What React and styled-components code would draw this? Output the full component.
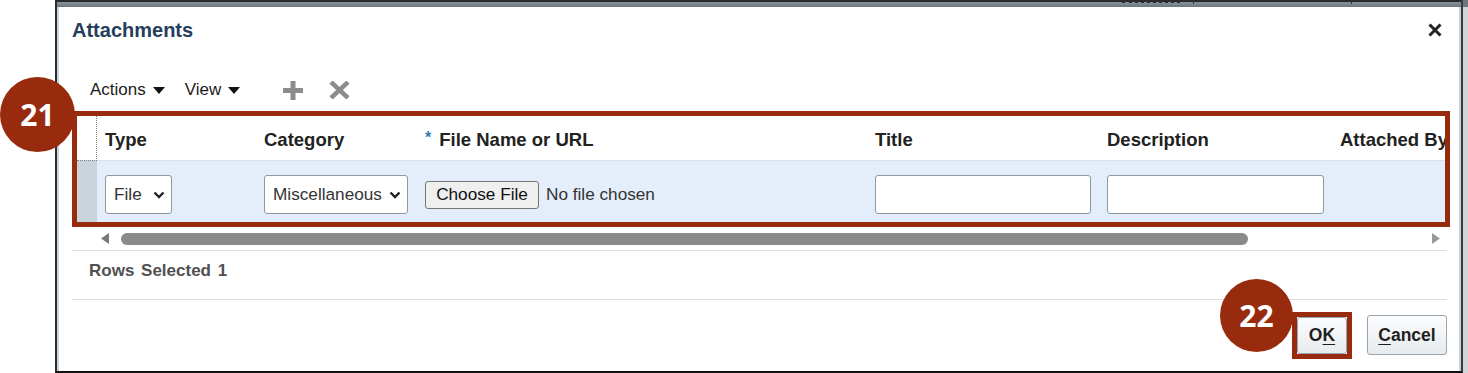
import React from 'react';
import styled, { createGlobalStyle } from 'styled-components';

const GlobalStyle = createGlobalStyle`
  html, body {
    margin: 0;
    padding: 0;
    background: #fff;
  }
  body {
    font-family: "Liberation Sans", Arial, sans-serif;
  }
`;

const RED = '#982b0d';

const Page = styled.div`
  position: relative;
  display: flex;
  width: 1468px;
  height: 373px;
  overflow: hidden;
  background: #fff;
`;

const Gutter = styled.div`
  flex: none;
  width: ${p => p.w}px;
  background: ${p => p.bg};
`;

const Dialog = styled.div`
  flex: none;
  width: 1408px;
  box-sizing: border-box;
  display: flex;
  flex-direction: column;
  border-left: 2px solid #2c2c2c;
  border-right: 2px solid #3a3a3a;
  border-bottom: 2px solid #111;
  background: #fff;
`;

const TopStrip = styled.div`
  height: 7px;
  flex: none;
  display: flex;
  align-items: flex-start;
  background: linear-gradient(#2a2a2a 0 2px, #87939a 2px, #6c777d 7px);
`;

const StripMark = styled.div`
  margin-left: ${p => p.at}px;
  width: ${p => p.w}px;
  height: 4px;
  border-top: ${p => (p.dotted ? '3px dotted #2b2b2b' : 'none')};
  border-left: ${p => (p.dotted ? 'none' : '1px solid #333')};
`;

const Body = styled.div`
  flex: 1;
  display: flex;
  flex-direction: column;
  border-left: 2px solid #c6d4df;
  border-right: 2px solid #c6d4df;
  padding: 0 12px 0 13px;
`;

const TitleBar = styled.div`
  height: 56px;
  box-sizing: border-box;
  padding-top: 12px;
  display: flex;
  align-items: flex-start;
  justify-content: space-between;
`;

const Title = styled.h1`
  margin: 0;
  font-size: 20px;
  line-height: 22px;
  font-weight: 700;
  color: #263d5c;
`;

const CloseIcon = styled.svg`
  margin: 4px 5px 0 0;
`;

const Toolbar = styled.div`
  height: 48px;
  box-sizing: border-box;
  padding: 6px 0 0 18px;
  display: flex;
  align-items: center;
`;

const Menu = styled.div`
  display: flex;
  align-items: center;
  gap: 7px;
  margin-right: ${p => p.mr}px;
  font-size: 17px;
  color: #1b1b1b;
`;

const ToolIcon = styled.svg`
  margin-right: ${p => p.mr || 0}px;
`;

const RedBox = styled.div`
  margin: 0 -3px 0 0;
  border: 5px solid ${RED};
  overflow: hidden;
`;

const cols = '20px 159px 161px 450px 232px 233px 1fr';

const HeadRow = styled.div`
  display: grid;
  grid-template-columns: ${cols};
  height: 44px;
  background: #fff;
  border-bottom: 1px solid #d9e0e6;
`;

const HeadCell = styled.div`
  display: flex;
  align-items: center;
  padding: 3px 0 0 8px;
  white-space: nowrap;
  font-size: 18.5px;
  font-weight: 700;
  color: #222;
`;

const SelectorHead = styled.div`
  border-right: 1px dotted #7d7d7d;
  border-bottom: 1px dotted #7d7d7d;
  margin-bottom: -1px;
`;

const Required = styled.span`
  color: #3579b6;
  font-size: 16px;
  align-self: flex-start;
  margin: 10px 8px 0 0;
`;

const DataRow = styled.div`
  display: grid;
  grid-template-columns: ${cols};
  height: 61px;
  background: #e4eefa;
`;

const Selector = styled.div`
  background: #c9d4dd;
`;

const Cell = styled.div`
  display: flex;
  align-items: center;
  box-sizing: border-box;
  padding: 6px 0 0 8px;
  font-size: 17.2px;
  color: #333;
  white-space: nowrap;
`;

const SelectBox = styled.div`
  width: ${p => p.w}px;
  height: 39px;
  box-sizing: border-box;
  display: flex;
  align-items: center;
  justify-content: space-between;
  padding: 0 6px 0 8px;
  background: #fff;
  border: 1px solid #8e989f;
  border-radius: 3px;
  color: #333;
`;

const FileButton = styled.button`
  width: 114px;
  height: 28px;
  padding: 0;
  margin: 0 7px 0 0;
  font-family: inherit;
  font-size: 17.2px;
  color: #111;
  background: #efefef;
  border: 1px solid #767676;
  border-radius: 3px;
`;

const TextInput = styled.input`
  width: ${p => p.w}px;
  height: 39px;
  box-sizing: border-box;
  margin: 0;
  background: #fff;
  border: 1px solid #8e989f;
  border-radius: 3px;
`;

const ScrollRow = styled.div`
  height: 23px;
  display: flex;
  align-items: center;
  padding: 0 7px 0 29px;
  border-bottom: 1px solid #dcdfe2;
`;

const Thumb = styled.div`
  width: 1127px;
  height: 12px;
  margin: 0 auto 0 12px;
  border-radius: 6px;
  background: #8a8a8a;
`;

const StatusRow = styled.div`
  height: 49px;
  box-sizing: border-box;
  padding: 10px 0 0 17px;
  font-size: 17px;
  line-height: 20px;
  font-weight: 700;
  color: #505050;
  border-bottom: 1px solid #dcdfe2;
  word-spacing: 2px;
`;

const Footer = styled.div`
  height: 70px;
  box-sizing: border-box;
  padding-top: 12px;
  display: flex;
  align-items: flex-start;
  justify-content: flex-end;
  gap: 15px;
`;

const OkFrame = styled.div`
  border: 5px solid ${RED};
  display: flex;
`;

const Button = styled.button`
  width: ${p => p.w}px;
  height: ${p => p.h}px;
  margin: ${p => (p.framed ? '0' : '3px 0 0 0')};
  padding: 0;
  font-family: inherit;
  font-size: 17.5px;
  font-weight: 700;
  color: #1e1e1e;
  background: linear-gradient(#fbfcfd, #e7ebee);
  border: 1px solid #98a5af;
  border-radius: 3px;

  u {
    text-decoration-thickness: 1px;
    text-underline-offset: 3px;
  }
`;

const Badge = styled.div`
  position: absolute;
  left: ${p => p.x}px;
  top: ${p => p.y}px;
  width: ${p => p.d}px;
  height: ${p => p.d}px;
  border-radius: 50%;
  background: ${RED};
  color: #fff;
  display: flex;
  align-items: center;
  justify-content: center;
  font-family: "Open Sans", "Liberation Sans", sans-serif;
  font-weight: 700;
  font-size: 30px;
`;

const Caret = () => (
  <svg width="12" height="7" viewBox="0 0 12 7">
    <polygon points="0,0 12,0 6,7" fill="#111" />
  </svg>
);

const Chevron = () => (
  <svg width="12" height="8" viewBox="0 0 12 8">
    <polyline points="1.5,1.5 6,6 10.5,1.5" fill="none" stroke="#222" strokeWidth="2.4" />
  </svg>
);

const App = () => {
  return (
    <Page>
      <GlobalStyle />
      <Gutter w={55} bg="#fff" />
      <Dialog>
        <TopStrip>
          <StripMark at={1065} w={58} dotted />
          <StripMark at={13} w={1} />
          <StripMark at={156} w={1} />
        </TopStrip>
        <Body>
          <TitleBar>
            <Title>Attachments</Title>
            <CloseIcon width="14" height="14" viewBox="0 0 14 14">
              <path d="M1.5 1.5 L12.5 12.5 M12.5 1.5 L1.5 12.5" stroke="#222" strokeWidth="3" />
            </CloseIcon>
          </TitleBar>

          <Toolbar>
            <Menu mr={20}>Actions <Caret /></Menu>
            <Menu mr={43}>View <Caret /></Menu>
            <ToolIcon width="20" height="19" viewBox="0 0 20 19" mr={26}>
              <path d="M10 0 V19 M0 9.5 H20" stroke="#8c8c8c" strokeWidth="5" />
            </ToolIcon>
            <ToolIcon width="21" height="18" viewBox="0 0 21 18">
              <path d="M2 1 L19 17 M19 1 L2 17" stroke="#8c8c8c" strokeWidth="4.5" />
            </ToolIcon>
          </Toolbar>

          <RedBox>
            <HeadRow>
              <SelectorHead />
              <HeadCell>Type</HeadCell>
              <HeadCell>Category</HeadCell>
              <HeadCell><Required>*</Required>File Name or URL</HeadCell>
              <HeadCell>Title</HeadCell>
              <HeadCell>Description</HeadCell>
              <HeadCell>Attached By</HeadCell>
            </HeadRow>
            <DataRow>
              <Selector />
              <Cell>
                <SelectBox w={67}>File <Chevron /></SelectBox>
              </Cell>
              <Cell>
                <SelectBox w={144}>Miscellaneous <Chevron /></SelectBox>
              </Cell>
              <Cell>
                <FileButton>Choose File</FileButton>
                No file chosen
              </Cell>
              <Cell>
                <TextInput w={216} />
              </Cell>
              <Cell>
                <TextInput w={217} />
              </Cell>
              <Cell />
            </DataRow>
          </RedBox>

          <ScrollRow>
            <svg width="8" height="11" viewBox="0 0 8 11">
              <polygon points="8,0 8,11 0,5.5" fill="#7a7a7a" />
            </svg>
            <Thumb />
            <svg width="8" height="11" viewBox="0 0 8 11">
              <polygon points="0,0 0,11 8,5.5" fill="#9a9a9a" />
            </svg>
          </ScrollRow>

          <StatusRow>Rows Selected 1</StatusRow>

          <Footer>
            <OkFrame>
              <Button framed w={50} h={37}>O<u>K</u></Button>
            </OkFrame>
            <Button w={80} h={40}><u>C</u>ancel</Button>
          </Footer>
        </Body>
      </Dialog>
      <Gutter w={5} bg="linear-gradient(#6c777d 0 7px, #d2d5d8 7px)" />

      <Badge x={0} y={77} d={75}>21</Badge>
      <Badge x={1220} y={279} d={73}>22</Badge>
    </Page>
  );
};

export default App;
